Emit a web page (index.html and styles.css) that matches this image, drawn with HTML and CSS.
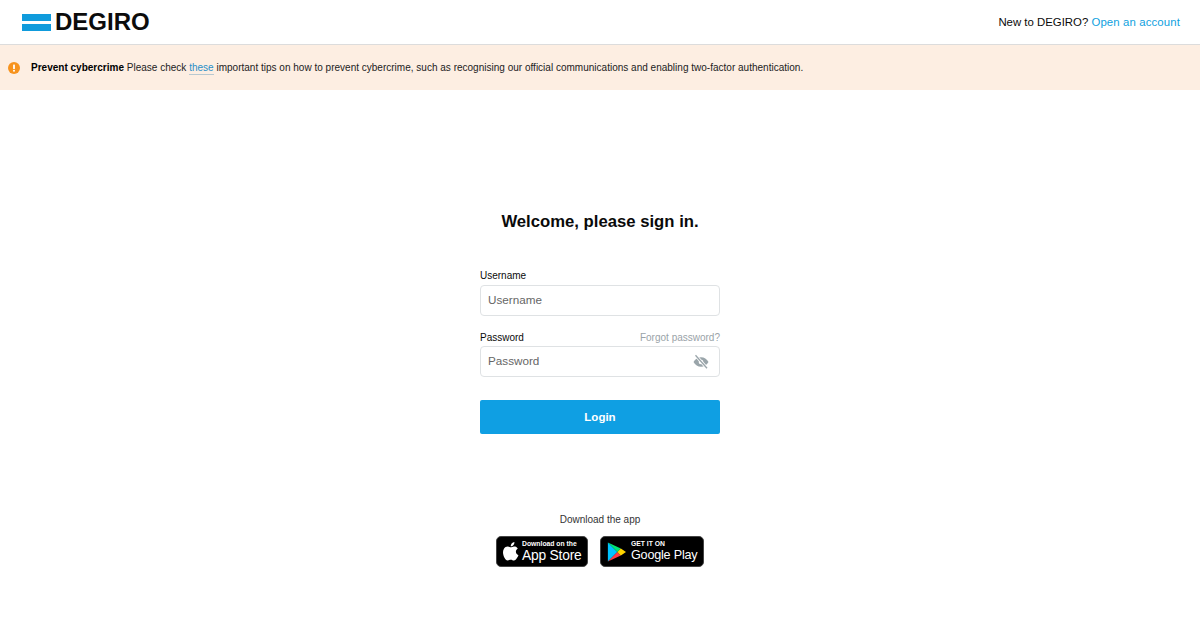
FILE: index.html
```html
<!DOCTYPE html>
<html lang="en">
<head>
<meta charset="utf-8">
<title>DEGIRO</title>
<link rel="stylesheet" href="styles.css">
</head>
<body>
<header class="topbar">
  <div class="logo">
    <span class="logo-mark"><i></i><i></i></span>
    <span class="logo-text">DEGIRO</span>
  </div>
  <div class="signup">New to DEGIRO? <a href="#">Open an account</a></div>
</header>
<div class="notice">
  <svg class="notice-icon" width="12" height="12" viewBox="0 0 12 12"><circle cx="6" cy="6" r="6" fill="#f7931e"/><rect x="5.100" y="2.400" width="1.800" height="4.600" rx=".6" fill="#fff"/><circle cx="6" cy="8.700" r="1" fill="#fff"/></svg>
  <p><b>Prevent cybercrime</b> Please check <a href="#">these</a> important tips on how to prevent cybercrime, such as recognising our official communications and enabling two-factor authentication.</p>
</div>
<main class="main">
  <h1>Welcome, please sign in.</h1>
  <form class="form">
    <div class="label-row"><span>Username</span></div>
    <div class="field"><span class="ph">Username</span></div>
    <div class="label-row second"><span>Password</span><a href="#">Forgot password?</a></div>
    <div class="field"><span class="ph">Password</span>
      <svg class="eye" width="16" height="16" viewBox="0 0 16 16"><path d="M.5 8c1.700-3 4.300-4.700 7.500-4.700S13.800 5 15.500 8c-1.700 3-4.300 4.700-7.500 4.700S2.200 11 .5 8z" fill="#9aa5aa"/><circle cx="8" cy="8" r="2.300" fill="#fff"/><path d="M2.500 1.300l11.500 13" stroke="#fff" stroke-width="3"/><path d="M2.500 1.300l11.500 13" stroke="#9aa5aa" stroke-width="1.300"/></svg>
    </div>
    <button class="login" type="button">Login</button>
  </form>
  <section class="download">
    <p>Download the app</p>
    <div class="badges">
      <a class="badge apple" href="#">
        <svg width="16" height="19" viewBox="0 0 17 20"><path fill="#fff" d="M12.100 0c.1 1.200-.3 2.300-1 3.100-.7.900-1.800 1.500-2.900 1.400-.1-1.100.4-2.300 1-3C10 .7 11.200.1 12.100 0zM15.700 6.900c-1.300.8-2 2-2 3.400 0 1.600 1 3 2.700 3.600-.4 1.100-.9 2.100-1.600 3.100-.9 1.300-1.800 2.600-3.200 2.600-1.300 0-1.800-.8-3.300-.8-1.600 0-2.100.8-3.300.8-1.400.1-2.400-1.400-3.300-2.700C.1 14.300-.8 9.900 1 7c.9-1.400 2.400-2.300 4-2.300 1.300 0 2.500.9 3.300.9.800 0 2.200-1.100 3.800-.9.700 0 2.500.3 3.600 2.200z"/></svg>
        <span class="badge-text"><small>Download on the</small><strong>App Store</strong></span>
      </a>
      <a class="badge play" href="#">
        <svg width="19" height="22" viewBox="0 0 22 24"><path fill="#00c3ff" d="M1 1v22l11-11z"/><path fill="#00e676" d="M1 1l11 11 4-4z"/><path fill="#ff3a44" d="M1 23l11-11 4 4z"/><path fill="#ffd400" d="M16 8l6 4-6 4-4-4z"/></svg>
        <span class="badge-text play-text"><small>GET IT ON</small><strong>Google Play</strong></span>
      </a>
    </div>
  </section>
</main>
</body>
</html>
```
FILE: styles.css
```css
* { box-sizing: border-box; }
html, body { margin: 0; height: 100%; }
body { background: #fff; color: #0a0a0a; font-family: "Liberation Sans", Arial, sans-serif; overflow: hidden; }
a { color: #0e9fe0; text-decoration: none; }
.topbar { height: 45px; border-bottom: 1px solid #dcdcdc; display: flex; align-items: center; justify-content: space-between; padding: 0 20px 0 22px; }
.logo { display: flex; align-items: center; gap: 4px; }
.logo-mark { display: flex; flex-direction: column; gap: 3px; width: 29px; }
.logo-mark i { display: block; height: 7px; background: #0f9bdc; }
.logo-text { font-size: 24px; line-height: 24px; font-weight: 700; color: #0c0c0c; }
.signup { font-size: 11.400px; }
.signup a { letter-spacing: .12px; }
.notice { height: 45px; background: #fdeee2; display: flex; align-items: center; gap: 11px; padding: 0 8px; font-size: 10px; color: #222; }
.notice p { margin: 0; letter-spacing: .008px; }
.notice b { color: #000; }
.notice a { color: #2a8fc8; border-bottom: 1px solid #b8c8d0; padding-bottom: 1px; }
.main { display: flex; flex-direction: column; align-items: center; padding-top: 120px; }
h1 { margin: 0; font-size: 16.700px; line-height: 24px; font-weight: 700; }
.form { width: 240px; margin-top: 33px; }
.label-row { display: flex; justify-content: space-between; align-items: center; height: 16px; font-size: 10px; margin-bottom: 2px; }
.label-row a { color: #9aa3a8; font-size: 10px; }
.label-row.second { margin-top: 13px; margin-bottom: 1px; }
.field { height: 31px; border: 1px solid #dfe2e4; border-radius: 4px; display: flex; align-items: center; justify-content: space-between; padding: 0 10px 2px 7px; font-size: 11.700px; color: #666; }
.eye { margin-top: 2px; }
.login { display: block; width: 100%; height: 34px; margin-top: 23px; padding: 0; border: 0; border-radius: 2px; background: #0f9fe3; color: #fff; font: 700 11.500px "Liberation Sans", Arial, sans-serif; }
.download { margin-top: 79px; display: flex; flex-direction: column; align-items: center; }
.download p { margin: 0; font-size: 10px; line-height: 14px; color: #333; }
.badges { display: flex; gap: 12px; margin-top: 9px; }
.badge { height: 31px; border-radius: 5px; background: #000; border: 1px solid #444; color: #fff; display: flex; align-items: center; white-space: nowrap; }
.apple { width: 92px; padding-left: 6px; gap: 3px; }
.play { width: 104px; padding-left: 6px; gap: 5px; }
.badge-text { display: flex; flex-direction: column; line-height: 1; }
.badge-text small { font-size: 6.800px; font-weight: 700; }
.badge-text strong { font-size: 13.800px; font-weight: 400; letter-spacing: -.2px; margin-top: 1px; }
.play-text strong { font-size: 12.600px; }
```
